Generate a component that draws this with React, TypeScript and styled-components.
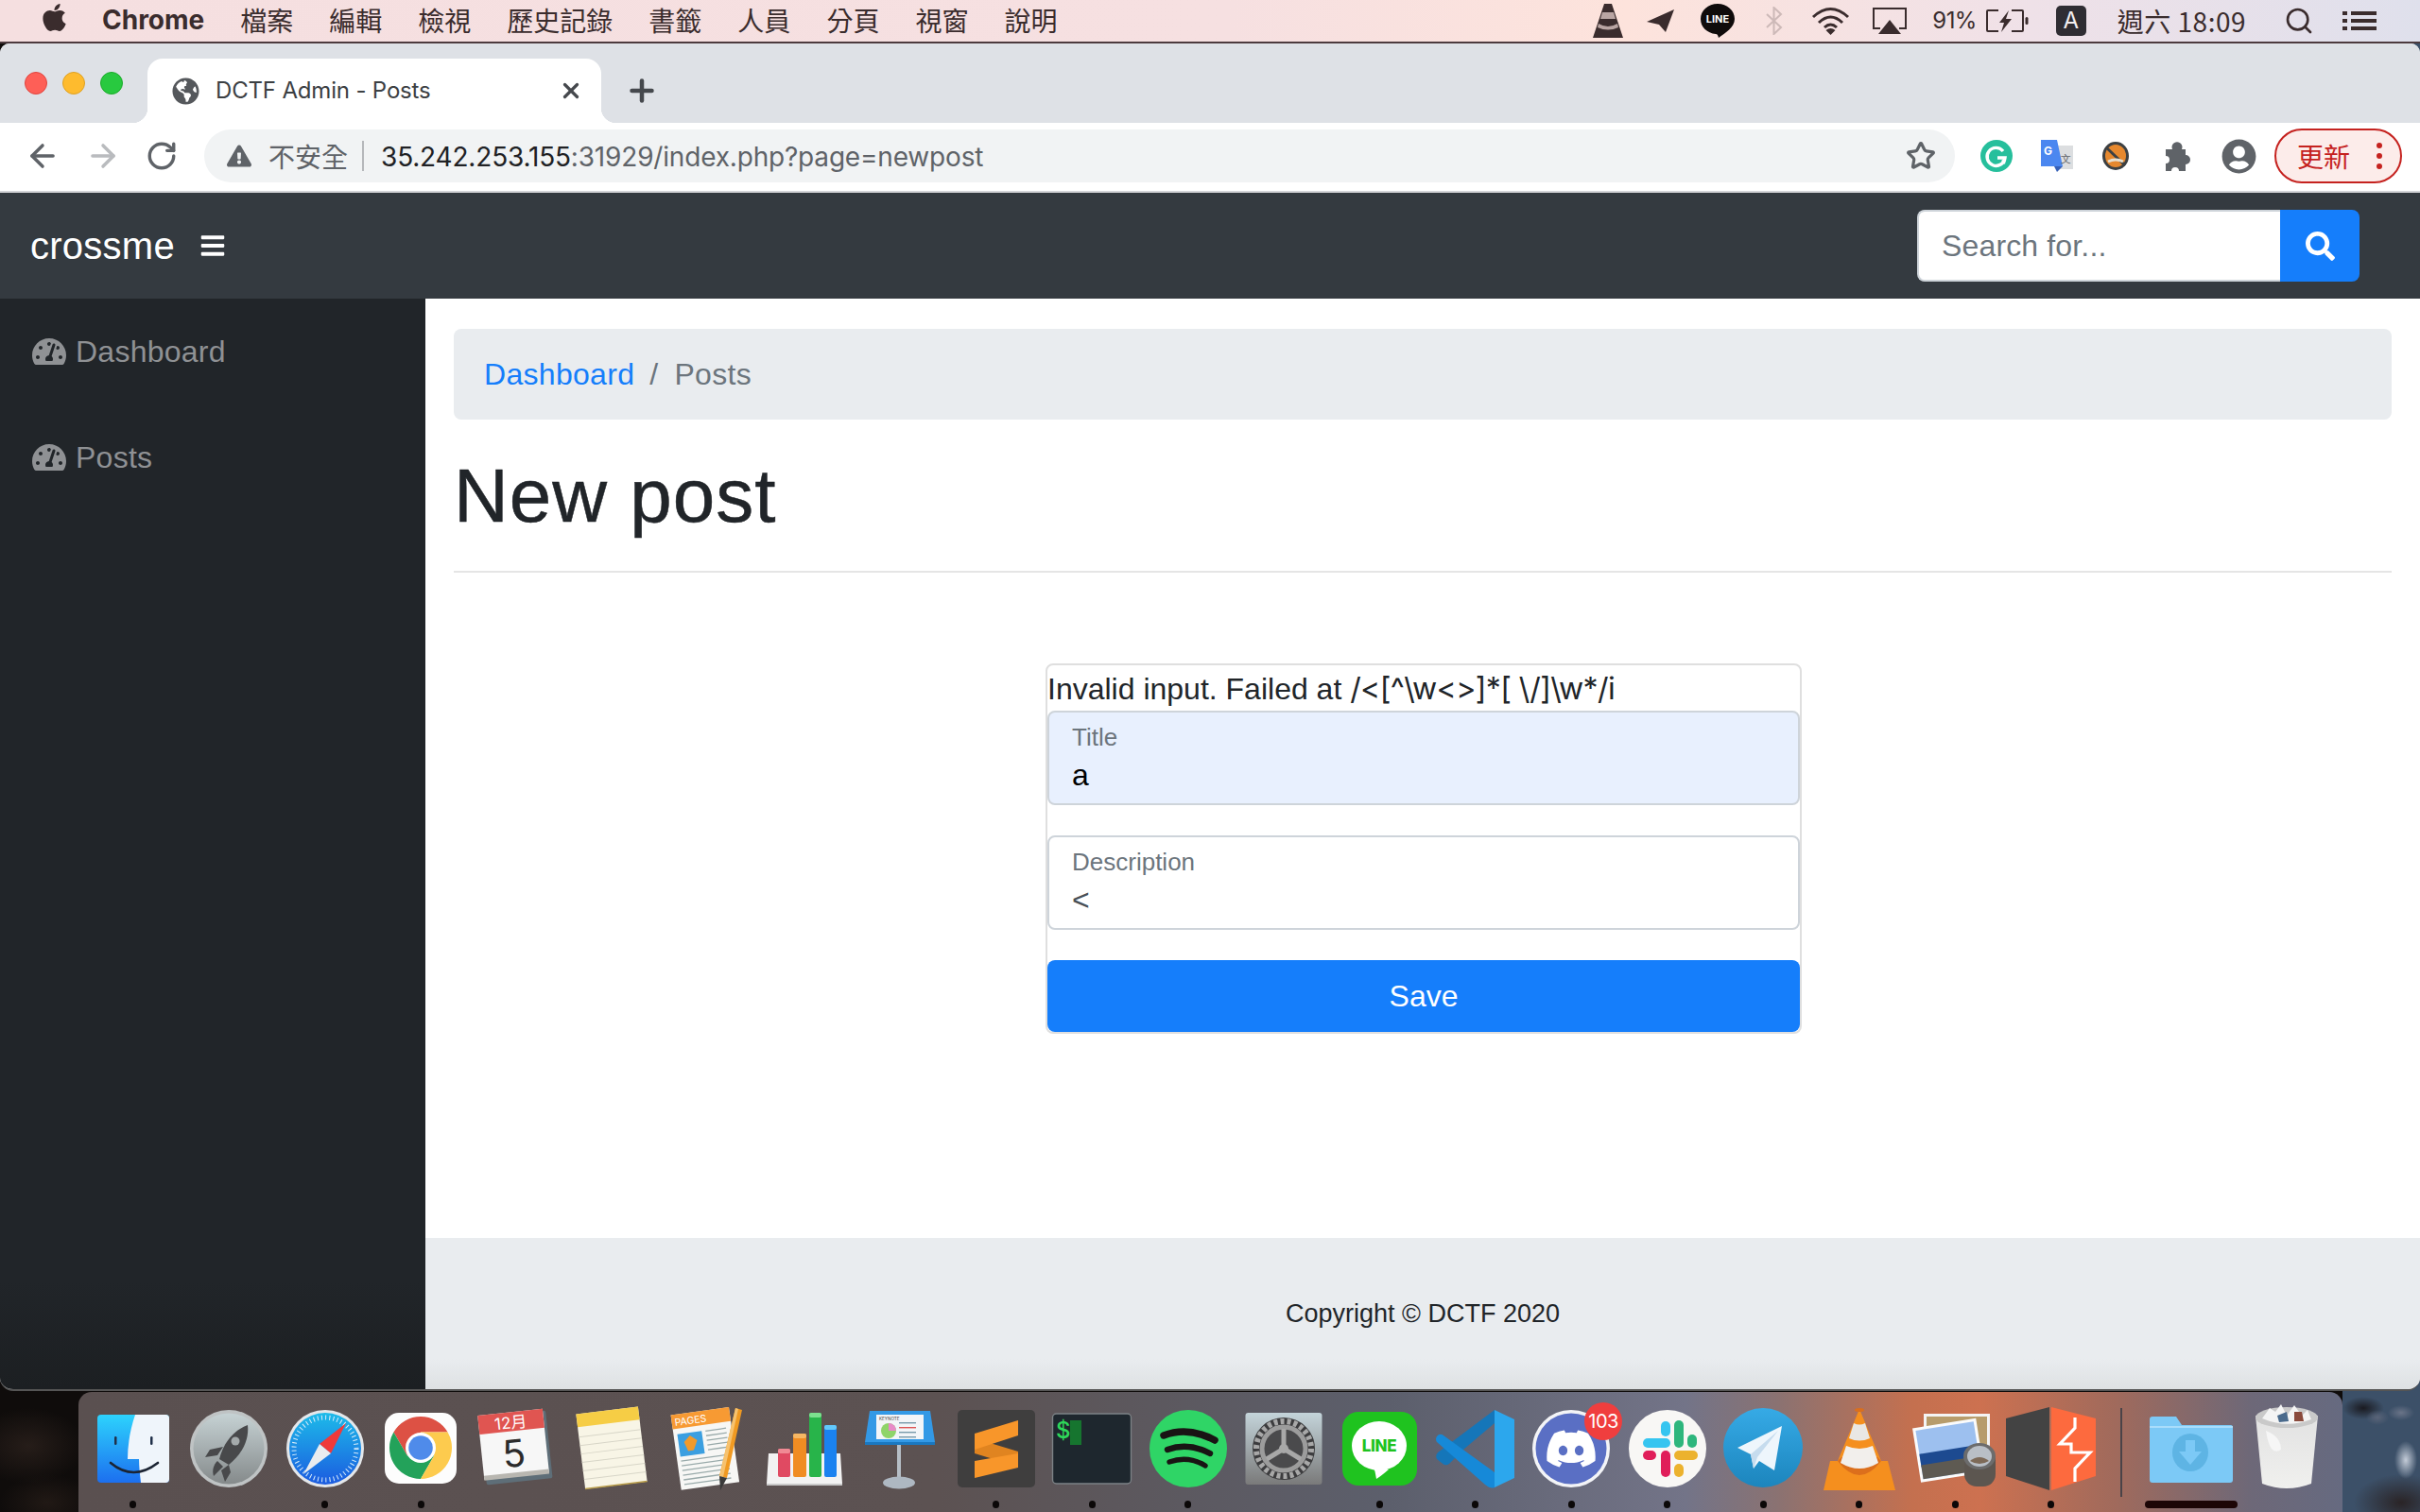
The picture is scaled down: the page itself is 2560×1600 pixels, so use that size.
import React from 'react';
import styled, { createGlobalStyle } from 'styled-components';
import { FaApple, FaBars, FaSearch, FaTachometerAlt, FaUserCircle, FaGlobeAmericas, FaDiscord, FaExclamationTriangle } from 'react-icons/fa';
import { ArrowLeft, ArrowRight, RotateCw, Star, X, Plus, Search as SearchLine } from 'lucide-react';

const SANS = `Inter, "Noto Sans CJK TC", "Noto Sans", sans-serif`;
const CJK = `"Noto Sans CJK TC", Inter, sans-serif`;
const PAGE = `"Liberation Sans", Arial, sans-serif`;

const Global = createGlobalStyle`
  html, body { margin: 0; padding: 0; background: #111; }
  * { box-sizing: border-box; }
  body { font-family: ${SANS}; }
`;

const Desktop = styled.div`
  width: 2560px; height: 1600px; overflow: hidden; display: flex; flex-direction: column;
  background:
    radial-gradient(ellipse 12px 20px at 2545px 1545px, #c4ccd8 0%, transparent 100%),
    radial-gradient(ellipse 14px 8px at 2540px 1495px, #6a7488 0%, transparent 100%),
    radial-gradient(ellipse 12px 8px at 2515px 1500px, #5a6478 0%, transparent 100%),
    radial-gradient(ellipse 22px 12px at 2500px 1490px, #1a1a20 0%, transparent 100%),
    radial-gradient(ellipse 50px 30px at 2540px 1590px, #2a2426 0%, transparent 100%),
    linear-gradient(100deg, #3c5068 0, #3c5068 2498px, #221e22 2515px, #2a2428 100%) right / 82px 100% no-repeat,
    radial-gradient(ellipse 60px 40px at 30px 1530px, #261d19 0%, transparent 100%),
    radial-gradient(ellipse 50px 30px at 50px 1590px, #211915 0%, transparent 100%),
    #0f0c0b;
`;

/* ---------- macOS menu bar ---------- */
const MenuBar = styled.header`
  height: 46px; flex: none; display: flex; align-items: center; justify-content: space-between;
  padding: 0 46px 2px 41px; color: #3a2c2d;
  background: linear-gradient(to right, #f5dfe0 0, #f6e0e1 1300px, #fde3dc 1720px, #efe1e8 2150px, #dfe0ec 100%);
  border-bottom: 2px solid #4c3a3e;
`;
const MenuLeft = styled.nav`display: flex; align-items: center;`;
const AppleMark = styled.span`display: flex; width: 67px; font-size: 33px; color: #3a2c2d; margin-top: -5px;`;
const AppName = styled.strong`font: 700 28px ${SANS}; letter-spacing: 0; margin-right: 38px;`;
const MenuItem = styled.span`font: 400 28px/1 ${CJK}; margin-right: 38px; white-space: nowrap;`;
const MenuRight = styled.div`display: flex; align-items: center; padding-top: 1px;`;
const Status = styled.span<{ $ml: number; $fade?: boolean }>`
  display: flex; align-items: center; margin-left: ${p => p.$ml}px; opacity: ${p => (p.$fade ? 0.22 : 1)};
`;
const StatusText = styled.span`font: 400 24px/1 ${SANS}; letter-spacing: -0.6px;`;
const ClockText = styled.span`font: 400 28px/1 ${CJK}; letter-spacing: 0.5px;`;
const InputBadge = styled.span`
  width: 32px; height: 32px; border-radius: 5px; background: #2f2d33; color: #f3eef0;
  font: 400 24px/32px ${SANS}; text-align: center;
`;

/* ---------- browser window ---------- */
const Window = styled.main`
  height: 1426px; flex: none; display: flex; flex-direction: column; overflow: hidden;
  border-radius: 10px 10px 14px 14px; border-bottom: 2px solid #555; background: #fff;
`;
const TabStrip = styled.div`
  height: 84px; flex: none; background: #dee1e6; display: flex; align-items: flex-end; padding-left: 26px;
`;
const Lights = styled.div`display: flex; gap: 16px; align-self: flex-start; margin-top: 30px; width: 130px;`;
const Light = styled.span<{ $c: string; $b: string }>`
  width: 24px; height: 24px; border-radius: 50%; background: ${p => p.$c}; border: 1px solid ${p => p.$b};
`;
const Tab = styled.div`
  position: relative; width: 480px; height: 68px; background: #fff; border-radius: 16px 16px 0 0;
  display: flex; align-items: center; padding: 0 19px 0 26px; color: #3c4043;
  &::before, &::after { content: ''; position: absolute; bottom: 0; width: 16px; height: 16px; }
  &::before { left: -16px; background: radial-gradient(circle at 0 0, transparent 16px, #fff 16.5px); }
  &::after { right: -16px; background: radial-gradient(circle at 100% 0, transparent 16px, #fff 16.5px); }
`;
const TabTitle = styled.span`flex: 1; font: 400 24px/1 ${SANS}; margin-left: 17px; letter-spacing: -0.17px; color: #3c4043;`;
const NewTab = styled.span`display: flex; align-self: center; margin: 0 0 0 25px; color: #45484d; padding-top: 16px;`;
const Toolbar = styled.div`
  height: 74px; flex: none; background: #fff; border-bottom: 2px solid #d3d4d8; display: flex; align-items: center;
  padding: 0 19px 2px 26px;
`;
const NavBtn = styled.span<{ $off?: boolean }>`
  display: flex; width: 64px; color: ${p => (p.$off ? '#b9bbbe' : '#5f6368')};
`;
const Omnibox = styled.div`
  flex: 1; height: 56px; margin: 0 12px 0 -2px; background: #f1f3f4; border-radius: 28px; display: flex; align-items: center;
  padding: 0 20px 0 24px;
`;
const Insecure = styled.span`font: 400 28px/1 ${CJK}; color: #5f6368; margin-left: 18px; white-space: nowrap;`;
const OmniDivider = styled.span`width: 2px; height: 32px; background: #b5b7ba; margin: 0 18px 0 15px;`;
const Url = styled.span`flex: 1; font: 400 28px/1 ${SANS}; color: #5f6368; letter-spacing: -0.18px; padding-top: 1px;`;
const UrlHost = styled.span`color: #202124;`;
const ExtSlot = styled.span<{ $w: number }>`display: flex; justify-content: center; align-items: center; width: ${p => p.$w}px; color: #5f6368;`;
const UpdatePill = styled.div`
  width: 135px; height: 58px; margin-left: 10px; border: 2px solid #c5221f; border-radius: 29px; background: #fcecea;
  display: flex; align-items: center; justify-content: space-between; padding: 0 19px 0 22px;
  color: #c5221f; font: 400 28px/1 ${CJK};
`;
const Kebab = styled.span`display: flex; flex-direction: column; gap: 5px;`;
const KebabDot = styled.span`width: 6px; height: 6px; border-radius: 50%; background: #c5221f;`;

/* ---------- page ---------- */
const Navbar = styled.div`
  height: 112px; flex: none; background: #343a40; display: flex; align-items: center; padding: 0 64px 0 32px;
`;
const Brand = styled.span`font: 400 40px/1 ${PAGE}; color: #fff; margin-right: 26px; letter-spacing: 0.25px;`;
const Burger = styled.span`display: flex; color: #fff; flex: 1;`;
const SearchGroup = styled.form`display: flex; height: 76px; margin: 0;`;
const SearchInput = styled.input`
  width: 384px; height: 76px; border: 2px solid #ced4da; border-right: 0; border-radius: 8px 0 0 8px; background: #fff;
  padding: 0 24px; font: 400 32px ${PAGE}; letter-spacing: 0.15px; outline: 0; color: #495057;
  &::placeholder { color: #6c757d; opacity: 1; }
`;
const SearchBtn = styled.button`
  width: 84px; height: 76px; border: 0; border-radius: 0 8px 8px 0; background: #157efb; color: #fff;
  display: flex; align-items: center; justify-content: center; padding: 0;
`;
const Body = styled.div`flex: 1; display: flex; min-height: 0;`;
const Sidebar = styled.aside`
  width: 450px; flex: none; padding-top: 28px; background: linear-gradient(to bottom, #212529 0, #212529 1040px, #1c1f22 100%);
`;
const SideLink = styled.a`
  display: flex; align-items: center; gap: 10px; height: 56px; margin-bottom: 56px; padding-left: 34px;
  color: #8f9194; font: 400 32px/1 ${PAGE}; letter-spacing: 0.25px;
`;
const Main = styled.div`flex: 1; display: flex; flex-direction: column; min-width: 0;`;
const Content = styled.div`flex: 1; padding: 32px 30px 0;`;
const Breadcrumb = styled.ol`
  margin: 0; height: 96px; padding: 0 32px; background: #e9ecef; border-radius: 8px; display: flex; align-items: center;
  list-style: none; font: 400 32px/1 ${PAGE}; letter-spacing: 0.3px; color: #6c757d;
`;
const CrumbLink = styled.a`color: #157efb;`;
const CrumbSep = styled.span`margin: 0 17px 0 16px;`;
const Heading = styled.h1`
  margin: 33px 0 0; font: 400 80px/96px ${PAGE}; color: #212529; letter-spacing: 1px; -webkit-text-stroke: 0.5px #212529;
`;
const Rule = styled.hr`margin: 31px 0 0; border: 0; border-top: 2px solid #e5e5e5;`;
const Card = styled.form`
  width: 800px; height: 392px; margin: 96px auto 0 626px;
  border: 2px solid #dfdfdf; border-radius: 8px; display: flex; flex-direction: column;
`;
const ErrorLine = styled.p`margin: 0; height: 48px; font: 400 32px/32px ${PAGE}; color: #212529; padding-top: 9px; white-space: nowrap;`;
const Regex = styled.span`font-family: ${SANS}; letter-spacing: -0.6px;`;
const Field = styled.label<{ $filled?: boolean }>`
  display: block; height: 100px; margin-bottom: 32px; padding: 11px 24px 0 24px; border: 2px solid #ced4da; border-radius: 8px;
  background: ${p => (p.$filled ? '#e8f0fe' : '#fff')};
`;
const FieldLabel = styled.span`display: block; font: 400 26px/30px ${PAGE}; color: #6c757d;`;
const FieldInput = styled.input<{ $filled?: boolean }>`
  display: block; width: 100%; border: 0; padding: 0; margin-top: 7px; background: transparent; outline: 0;
  font: 400 32px/36px ${PAGE}; color: ${p => (p.$filled ? '#000' : '#495057')};
`;
const SaveBtn = styled.button`
  height: 76px; border: 0; border-radius: 8px; background: #157efb; color: #fff; font: 400 32px ${PAGE}; padding: 0;
`;
const Footer = styled.footer`
  height: 160px; flex: none; display: flex; align-items: center; justify-content: center;
  background: linear-gradient(to bottom, #e9ecef 0, #e9ecef 80%, #dee1e3 100%);
  font: 400 27px/1 ${PAGE}; color: #212529;
`;

/* ---------- dock ---------- */
const Dock = styled.footer`
  flex: none; height: 127px; margin: 1px 82px 0 83px; border-radius: 14px 14px 0 0; padding: 11px 0 0 7px; display: flex;
  background: linear-gradient(to right, #5a5050 0, #5c5252 38%, #5c5f6c 58%, #737488 71%, #8a7272 75%, #c4704f 81%, #cd7150 84%, #a06a5c 90%, #6d6878 96%, #666a80 100%);
`;
const Slot = styled.div`width: 101.45px; flex: none; display: flex; flex-direction: column; align-items: center;`;
const IconArt = styled.svg`width: 100px; height: 96px; flex: none; display: block; overflow: visible;`;
const Dot = styled.span<{ $on?: boolean; $wide?: boolean }>`
  margin-top: 8px; height: 8px; width: ${p => (p.$wide ? 98 : 7)}px; border-radius: 4px;
  background: ${p => (p.$wide ? '#1c0606' : p.$on ? '#0b0808' : 'transparent')};
`;
const DockSep = styled.span`width: 2px; height: 94px; background: #4a4348; margin: 6px 22px 0 23px; flex: none;`;

const T: React.FC<React.SVGProps<SVGTextElement>> = ({ children, ...p }) => (
  <text fontFamily="Inter, 'Noto Sans CJK TC', sans-serif" {...p}>{children}</text>
);

const Finder = () => (
  <>
    <defs>
      <linearGradient id="fb" x1="0" y1="0" x2="0" y2="1"><stop offset="0" stopColor="#2dd3fd" /><stop offset="1" stopColor="#1c6fef" /></linearGradient>
      <clipPath id="fc"><rect x="12" y="13" width="76" height="72" rx="4" /></clipPath>
    </defs>
    <g clipPath="url(#fc)">
      <rect x="12" y="13" width="76" height="72" fill="url(#fb)" />
      <path d="M52 13 H88 V85 H58 C57 76 56 68 56 60 H44 C44 44 47 28 52 13Z" fill="#eff5fb" />
    </g>
    <rect x="30" y="36" width="2.5" height="9" rx="1.2" fill="#20304a" />
    <rect x="68" y="36" width="2.5" height="9" rx="1.2" fill="#20304a" />
    <path d="M26 64 Q50 84 76 64" fill="none" stroke="#1b2433" strokeWidth="2.6" strokeLinecap="round" />
  </>
);
const Launchpad = () => (
  <>
    <defs><linearGradient id="lp" x1="0" y1="0" x2="0" y2="1"><stop offset="0" stopColor="#c6d2d4" /><stop offset="1" stopColor="#858a8b" /></linearGradient></defs>
    <circle cx="50" cy="49" r="41" fill="#bfc3c4" />
    <circle cx="50" cy="49" r="37.5" fill="url(#lp)" />
    <path d="M70 24 C72 42 62 56 50 66 L40 60 C44 44 54 30 70 24Z" fill="#48494b" />
    <path d="M44 47 L30 50 L25 58 L38 56Z M50 66 L52 74 L46 84 L42 72Z" fill="#48494b" />
    <path d="M38 62 L44 68 L34 78 C32 72 34 66 38 62Z" fill="#48494b" />
    <circle cx="57" cy="41" r="4.5" fill="#a4aaab" />
  </>
);
const Safari = () => (
  <>
    <defs><linearGradient id="sf" x1="0" y1="0" x2="0" y2="1"><stop offset="0" stopColor="#1dbbe9" /><stop offset="1" stopColor="#1b5be0" /></linearGradient></defs>
    <circle cx="50" cy="49" r="41" fill="#e4e7ea" />
    <circle cx="50" cy="49" r="38" fill="url(#sf)" />
    <circle cx="50" cy="49" r="33" fill="none" stroke="#d8ecfa" strokeWidth="5" strokeDasharray="1 3.2" />
    <path d="M72 22 L44 44 L56 54Z" fill="#f03a3a" />
    <path d="M27 76 L44 44 L56 54Z" fill="#e9ecef" />
  </>
);
const Chrome = () => (
  <>
    <rect x="12" y="11" width="76" height="75" rx="15" fill="#fdfdfd" />
    <path d="M21.4 31.5 A33 33 0 0 1 78.6 31.5 H50 L35.7 56.25Z" fill="#dd5144" />
    <path d="M21.4 31.5 A33 33 0 0 0 50 81 L64.3 56.25 H35.7Z" fill="#23a25a" />
    <path d="M78.6 31.5 A33 33 0 0 1 50 81 L64.3 56.25 L50 31.5Z" fill="#fdcb4e" />
    <circle cx="50" cy="48" r="16" fill="#fff" />
    <circle cx="50" cy="48" r="12.8" fill="#4f8bea" />
  </>
);
const Calendar = () => (
  <g transform="rotate(-6 50 48)">
    <rect x="15" y="12" width="70" height="72" rx="2" fill="#5e6e78" />
    <rect x="13" y="10" width="69" height="68" fill="#f7f7f7" />
    <rect x="13" y="10" width="69" height="20" fill="#e05551" />
    <T x="47" y="27" fontSize="17" fill="#fff" textAnchor="middle">12月</T>
    <T x="47" y="68" fontSize="40" fill="#2b2b2b" textAnchor="middle">5</T>
    <rect x="13" y="74" width="69" height="5" fill="#b8b6b0" />
  </g>
);
const Notes = () => (
  <g transform="rotate(-7 50 48)">
    <rect x="16" y="8" width="66" height="80" fill="#f8f5e6" />
    <rect x="16" y="8" width="66" height="14" fill="#f6cd45" />
    {[32, 41, 50, 59, 68, 77].map(y => <rect key={y} x="16" y={y} width="66" height="1" fill="#d8d6c8" />)}
    <rect x="16" y="87" width="66" height="1.5" fill="#b99d49" />
  </g>
);
const Pages = () => (
  <>
    <g transform="rotate(-8 46 50)">
      <rect x="16" y="9" width="62" height="80" fill="#f7f7f5" />
      <rect x="16" y="9" width="62" height="15" fill="#f79a33" />
      <T x="19" y="21" fontSize="10.5" fill="#fff">PAGES</T>
      <rect x="20" y="30" width="26" height="24" fill="#3b9fe0" />
      <path d="M33 33 L40 39 L35 49 L29 49 L26 39Z" fill="#f19a2b" />
      {[30, 35, 40, 45, 50].map(y => <rect key={y} x="50" y={y} width="22" height="1.3" fill="#9aa" />)}
      {[58, 63, 68, 73, 78, 83].map(y => <rect key={y} x="20" y={y} width="50" height="1.3" fill="#9aa" />)}
    </g>
    <path d="M79 6 L86 8 L70 80 L62 78Z" fill="#f09a22" />
    <path d="M79 6 L82 7 L66 79 L62 78Z" fill="#f6c26f" />
    <path d="M62 78 L70 80 L63 93Z" fill="#3a3a3a" />
  </>
);
const Numbers = () => (
  <>
    <path d="M12 54 H88 L90 86 H10Z" fill="#f2f2f2" />
    <rect x="10" y="86" width="80" height="2" fill="#c9c9c9" />
    <rect x="22" y="49" width="13" height="30" rx="2" fill="#e04a62" />
    <rect x="22" y="49" width="13" height="5" rx="2" fill="#f08a94" />
    <rect x="38" y="33" width="14" height="46" rx="2" fill="#f08c22" />
    <rect x="38" y="33" width="14" height="5" rx="2" fill="#f6b764" />
    <rect x="55" y="11" width="13" height="68" rx="2" fill="#28b44a" />
    <rect x="55" y="11" width="13" height="5" rx="2" fill="#7ce08e" />
    <rect x="71" y="24" width="13" height="55" rx="2" fill="#1a82f0" />
    <rect x="71" y="24" width="13" height="5" rx="2" fill="#62c8fb" />
  </>
);
const Keynote = () => (
  <>
    <path d="M18 9 H82 L87 42 H13Z" fill="#3399e6" />
    <rect x="13" y="42" width="74" height="3" fill="#1a78c0" />
    <rect x="25" y="13" width="50" height="26" fill="#f3f5f8" />
    <T x="28" y="19" fontSize="4.6" fill="#444">KEYNOTE</T>
    <circle cx="38" cy="30" r="8" fill="#8fd46a" />
    <path d="M38 30 V22 A8 8 0 0 1 46 30Z" fill="#e88ac8" />
    <rect x="49" y="21" width="18" height="1.4" fill="#79a" />
    <rect x="49" y="26" width="18" height="1.4" fill="#d55" />
    <rect x="49" y="31" width="18" height="1.4" fill="#79a" />
    <rect x="49" y="36" width="18" height="1.4" fill="#79a" />
    <rect x="47" y="45" width="4" height="36" fill="#b6bec6" />
    <ellipse cx="49" cy="85" rx="17" ry="6.5" fill="#aeb8c2" />
  </>
);
const Sublime = () => (
  <>
    <rect x="9" y="8" width="82" height="82" rx="5" fill="#3f3e3e" />
    <path d="M27 38 L73 52 V68 L27 54Z" fill="#e08420" />
    <path d="M73 19 V35 L27 50 V33Z" fill="#f8962a" />
    <path d="M73 54 V69 L27 80 V62Z" fill="#f8962a" />
  </>
);
const Terminal = () => (
  <>
    <rect x="8.5" y="12" width="83" height="74" rx="4" fill="#1e272e" stroke="#7c8286" strokeWidth="1.4" />
    <T x="12" y="38" fontSize="24" fill="#2ed85a" fontWeight="500">$</T>
    <rect x="27" y="19" width="12" height="26" fill="#16752f" />
  </>
);
const Spotify = () => (
  <>
    <circle cx="50" cy="49" r="41" fill="#2fd566" />
    <path d="M24 35 Q50 25 78 40" fill="none" stroke="#191414" strokeWidth="7.5" strokeLinecap="round" />
    <path d="M28 50 Q50 42 73 54" fill="none" stroke="#191414" strokeWidth="6.4" strokeLinecap="round" />
    <path d="M30 63 Q50 56 68 67" fill="none" stroke="#191414" strokeWidth="5.4" strokeLinecap="round" />
  </>
);
const SysPrefs = () => (
  <>
    <defs><linearGradient id="sp" x1="0" y1="0" x2="0" y2="1"><stop offset="0" stopColor="#c4d4da" /><stop offset="1" stopColor="#7a7a7a" /></linearGradient></defs>
    <rect x="9.5" y="11" width="81" height="76" rx="3" fill="url(#sp)" />
    <circle cx="50" cy="49" r="33" fill="#3c3c3e" />
    <circle cx="50" cy="49" r="29" fill="none" stroke="#a8a8a8" strokeWidth="6" strokeDasharray="4 3" />
    <circle cx="50" cy="49" r="23" fill="#4a4a4c" stroke="#9c9c9c" strokeWidth="5" />
    <path d="M50 49 L50 28 M50 49 L32 60 M50 49 L68 60" stroke="#a8a8a8" strokeWidth="5" />
    <circle cx="50" cy="49" r="5" fill="#a8a8a8" />
  </>
);
const LineApp = () => (
  <>
    <rect x="11" y="10" width="79" height="78" rx="17" fill="#1fc31f" />
    <ellipse cx="50" cy="46" rx="29" ry="26" fill="#fff" />
    <path d="M44 68 L50 68 L60 71 Q52 78 47 81 Q46 74 44 68Z" fill="#fff" />
    <T x="50" y="52" fontSize="17" fontWeight="800" fill="#1fc31f" textAnchor="middle" letterSpacing="-0.3">LINE</T>
  </>
);
const VSCode = () => (
  <>
    <path d="M70 22 L37 50 L22 65 Q18 68 14 64 L9 60 Q7 56 10 53 L70 8Z" fill="#1576b9" />
    <path d="M9 36 Q12 32 16 35 L70 74 V90 Q66 92 60 87 L9 42 Q7 39 9 36Z" fill="#1689d8" />
    <path d="M70 8 L91 18 V80 L70 90Z" fill="#2ca7ed" />
  </>
);
const Discord = () => (
  <>
    <circle cx="50" cy="49" r="41" fill="#f3f4f7" />
    <circle cx="50" cy="49" r="37.5" fill="#5a6fc4" />
    <FaDiscord x="22" y="21" size={56} color="#fff" />
    <circle cx="84" cy="20" r="20" fill="#f03e3e" />
    <T x="84" y="27" fontSize="20" fill="#fff" textAnchor="middle" letterSpacing="-0.6">103</T>
  </>
);
const Slack = () => (
  <>
    <circle cx="50" cy="49" r="41" fill="#f8f7f5" />
    <rect x="43" y="20" width="10" height="16" rx="5" fill="#36c5f0" />
    <rect x="24" y="38" width="29" height="10" rx="5" fill="#36c5f0" />
    <rect x="57" y="19" width="10" height="29" rx="5" fill="#2eb67d" />
    <rect x="71" y="34" width="10" height="14" rx="5" fill="#2eb67d" />
    <rect x="57" y="51" width="25" height="10" rx="5" fill="#ecb22e" />
    <rect x="57" y="65" width="10" height="14" rx="5" fill="#ecb22e" />
    <rect x="43" y="51" width="10" height="28" rx="5" fill="#e01e5a" />
    <rect x="24" y="51" width="14" height="10" rx="5" fill="#e01e5a" />
  </>
);
const TelegramApp = () => (
  <>
    <defs><linearGradient id="tg" x1="0" y1="0" x2="0" y2="1"><stop offset="0" stopColor="#36aae6" /><stop offset="1" stopColor="#1c85bd" /></linearGradient></defs>
    <circle cx="50" cy="48" r="42" fill="url(#tg)" />
    <path d="M23 48 L70 25 L62 72 L46 62 L40 70 L37 55Z" fill="#eef6fc" />
    <path d="M37 55 L66 30 L44 58 L40 70Z" fill="#c6dcee" />
  </>
);
const Vlc = () => (
  <>
    <path d="M19 62 H27 L50 7 L73 62 H80 L88 93 H12Z" fill="#f58f1e" />
    <path d="M27 62 Q50 92 73 62 L69 58 H31Z" fill="#dc6f1c" />
    <path d="M44 22 Q50 25 56 22 L61 38 Q50 43 39 38Z" fill="#e9e7e4" />
    <path d="M36 46 Q50 52 64 46 L70 64 Q50 76 30 64Z" fill="#f2efec" />
    <ellipse cx="50" cy="8" rx="5" ry="2" fill="#d96f1f" />
  </>
);
const Preview = () => (
  <>
    <rect x="17" y="12" width="70" height="54" fill="#f4f4f4" />
    <rect x="20" y="15" width="64" height="50" fill="#b79c6b" />
    <g transform="rotate(-9 42 50)">
      <rect x="9" y="22" width="68" height="58" fill="#fbfbfb" />
      <rect x="12" y="25" width="62" height="52" fill="#9dc0ef" />
      <rect x="12" y="50" width="62" height="14" fill="#1d4a90" />
      <rect x="12" y="62" width="62" height="15" fill="#5e5a52" />
    </g>
    <rect x="60" y="48" width="33" height="41" rx="13" fill="#5c5650" />
    <ellipse cx="76" cy="57" rx="17" ry="14" fill="#6c6c6c" />
    <ellipse cx="76" cy="57" rx="13" ry="11" fill="#b9bfc6" />
    <path d="M66 62 Q76 54 86 62 Q76 68 66 62Z" fill="#7d6a58" />
  </>
);
const Burp = () => (
  <>
    <path d="M3 17 L49 5 V93 L3 78Z" fill="#434343" />
    <path d="M51 5 L98 17 V78 L51 93Z" fill="#fd6a3e" />
    <path d="M76 16 V27 L60 44 H72 V53 H92 L76 70 V84" fill="none" stroke="#fff" strokeWidth="3.2" />
  </>
);
const Downloads = () => (
  <>
    <path d="M6 18 Q6 15 9 15 H34 L40 24 H92 Q94 24 94 27 V82 Q94 85 91 85 H9 Q6 85 6 82Z" fill="#7cc9f6" />
    <rect x="6" y="25" width="88" height="2" fill="#a9ddfb" />
    <ellipse cx="49" cy="53" rx="19" ry="20" fill="#5eb4e4" />
    <path d="M44 40 H54 V52 H61 L49 66 L37 52 H44Z" fill="#7cc9f6" />
  </>
);
const Trash = () => (
  <>
    <defs><linearGradient id="tr" x1="0" y1="0" x2="0" y2="1"><stop offset="0" stopColor="#e2e2e2" /><stop offset="1" stopColor="#f0f0ee" /></linearGradient></defs>
    <path d="M17 14 L24 86 Q50 96 76 86 L83 14Z" fill="url(#tr)" />
    <ellipse cx="50" cy="16" rx="33" ry="11" fill="#c9c9c9" />
    <path d="M24 17 L32 6 L38 10 L44 2 L50 14 L58 3 L66 14 L72 8 L76 18 Q50 28 24 17Z" fill="#f4f4f4" />
    <path d="M40 14 L50 10 L52 20 L42 21Z" fill="#4a6a8c" />
    <path d="M58 10 L66 10 L68 20 L58 20Z" fill="#8a4a3c" />
    <path d="M28 30 Q44 36 44 50 Q32 58 28 30Z" fill="#f6f6f6" />
  </>
);

const apps: { Art: React.FC; on?: boolean }[] = [
  { Art: Finder, on: true }, { Art: Launchpad }, { Art: Safari, on: true }, { Art: Chrome, on: true }, { Art: Calendar },
  { Art: Notes }, { Art: Pages }, { Art: Numbers }, { Art: Keynote }, { Art: Sublime, on: true }, { Art: Terminal, on: true },
  { Art: Spotify, on: true }, { Art: SysPrefs }, { Art: LineApp, on: true }, { Art: VSCode, on: true }, { Art: Discord, on: true },
  { Art: Slack, on: true }, { Art: TelegramApp, on: true }, { Art: Vlc, on: true }, { Art: Preview, on: true }, { Art: Burp, on: true },
];

const DockItem: React.FC<{ Art: React.FC; on?: boolean; wide?: boolean }> = ({ Art, on, wide }) => (
  <Slot>
    <IconArt viewBox="0 0 100 96"><Art /></IconArt>
    <Dot $on={on} $wide={wide} />
  </Slot>
);

const menus = ['檔案', '編輯', '檢視', '歷史記錄', '書籤', '人員', '分頁', '視窗', '說明'];

const BarIcon = ({ w, h, vb, children }: { w: number; h: number; vb: string; children: React.ReactNode }) => (
  <svg width={w} height={h} viewBox={vb}>{children}</svg>
);

export default function App() {
  return (
    <Desktop>
      <Global />
      <MenuBar>
        <MenuLeft>
          <AppleMark><FaApple /></AppleMark>
          <AppName>Chrome</AppName>
          {menus.map(m => <MenuItem key={m}>{m}</MenuItem>)}
        </MenuLeft>
        <MenuRight>
          <Status $ml={0}>
            <BarIcon w={32} h={36} vb="0 0 32 36">
              <path d="M12 0 H20 L32 36 H0Z" fill="#3a2c2d" />
              <path d="M10 9 H22 L24 16 H8Z M6 21 Q16 27 26 21 L27 25 Q16 30 5 25Z" fill="#b9a5a3" />
            </BarIcon>
          </Status>
          <Status $ml={25}>
            <BarIcon w={30} h={26} vb="0 0 30 26">
              <path d="M0 14 L29 1 L20 25 L13 17Z" fill="#3a2c2d" />
            </BarIcon>
          </Status>
          <Status $ml={27}>
            <BarIcon w={36} h={36} vb="0 0 36 36">
              <path d="M18 0 C28 0 36 7 36 16 C36 25 26 31 19 36 C18 33 18 32 16 32 C7 31 0 25 0 16 C0 7 8 0 18 0Z" fill="#0f0b0b" />
              <text x="18" y="20" fontFamily="Inter" fontSize="11" fontWeight="700" fill="#fff" textAnchor="middle">LINE</text>
            </BarIcon>
          </Status>
          <Status $ml={32} $fade>
            <BarIcon w={19} h={30} vb="0 0 19 30">
              <path d="M2 8 L17 22 L9.5 29 V1 L17 8 L2 22" fill="none" stroke="#3a2c2d" strokeWidth="2" />
            </BarIcon>
          </Status>
          <Status $ml={30}>
            <BarIcon w={41} h={30} vb="0 0 41 30">
              <path d="M2 11 Q20.5 -6 39 11 M8 17 Q20.5 5 33 17 M14 22 Q20.5 16 27 22" fill="none" stroke="#3a2c2d" strokeWidth="3" />
              <path d="M20.5 30 L15.5 25 Q20.5 21 25.5 25Z" fill="#3a2c2d" />
            </BarIcon>
          </Status>
          <Status $ml={24}>
            <BarIcon w={36} h={28} vb="0 0 36 28">
              <path d="M8 22 H1 V1 H35 V22 H28" fill="none" stroke="#3a2c2d" strokeWidth="2" />
              <path d="M18 13 L30 28 H6Z" fill="#3a2c2d" />
            </BarIcon>
          </Status>
          <Status $ml={27}><StatusText>91%</StatusText></Status>
          <Status $ml={10}>
            <BarIcon w={45} h={24} vb="0 0 45 24">
              <path d="M13 1 H2 Q1 1 1 2 V22 Q1 23 2 23 H13 M27 1 H38 Q39 1 39 2 V22 Q39 23 38 23 H27" fill="none" stroke="#3a2c2d" strokeWidth="2" />
              <rect x="41.5" y="8" width="3" height="8" rx="1.5" fill="#3a2c2d" />
              <path d="M24 1 L14 14 H19 L16 24 L27 10 H21Z" fill="#3a2c2d" />
            </BarIcon>
          </Status>
          <Status $ml={29}><InputBadge>A</InputBadge></Status>
          <Status $ml={33}><ClockText>週六 18:09</ClockText></Status>
          <Status $ml={40}><SearchLine size={32} strokeWidth={2} color="#3a2c2d" /></Status>
          <Status $ml={30}>
            <BarIcon w={36} h={22} vb="0 0 36 22">
              <path d="M0 1 H5 V5 H0Z M9 1 H36 V5 H9Z M0 9 H5 V13 H0Z M9 9 H36 V13 H9Z M0 17 H5 V21 H0Z M9 17 H36 V21 H9Z" fill="#3a2c2d" />
            </BarIcon>
          </Status>
        </MenuRight>
      </MenuBar>

      <Window>
        <TabStrip>
          <Lights>
            <Light $c="#fe5f57" $b="#e0443e" />
            <Light $c="#febb2e" $b="#dea123" />
            <Light $c="#28c93f" $b="#1aab29" />
          </Lights>
          <Tab>
            <FaGlobeAmericas size={29} color="#55585c" />
            <TabTitle>DCTF Admin - Posts</TabTitle>
            <X size={26} strokeWidth={3} color="#45484d" />
          </Tab>
          <NewTab><Plus size={36} strokeWidth={3} /></NewTab>
        </TabStrip>
        <Toolbar>
          <NavBtn><ArrowLeft size={38} strokeWidth={2.2} /></NavBtn>
          <NavBtn $off><ArrowRight size={38} strokeWidth={2.2} /></NavBtn>
          <NavBtn><RotateCw size={34} strokeWidth={2.4} /></NavBtn>
          <Omnibox>
            <FaExclamationTriangle size={26} color="#5f6368" />
            <Insecure>不安全</Insecure>
            <OmniDivider />
            <Url><UrlHost>35.242.253.155</UrlHost>:31929/index.php?page=newpost</Url>
            <Star size={32} strokeWidth={2.4} color="#5f6368" />
          </Omnibox>
          <ExtSlot $w={64}>
            <BarIcon w={34} h={34} vb="0 0 34 34">
              <circle cx="17" cy="17" r="17" fill="#26bf9c" />
              <path d="M24 12 A9.5 9.5 0 1 0 26 19 H18" fill="none" stroke="#fff" strokeWidth="3.4" />
              <path d="M22 22 L26 26 L27 19Z" fill="#fff" />
            </BarIcon>
          </ExtSlot>
          <ExtSlot $w={64}>
            <BarIcon w={34} h={34} vb="0 0 34 34">
              <path d="M14 6 H34 V31 H19Z" fill="#dcdee0" />
              <path d="M0 0 H17 L23 28 H0Z" fill="#4b87f0" />
              <path d="M14 28 H23 L17 34Z" fill="#3560b8" />
              <text x="3" y="16" fontFamily="Inter" fontSize="12" fontWeight="700" fill="#fff">G</text>
              <text x="21" y="24" fontFamily="Inter" fontSize="11" fill="#5f6368">文</text>
            </BarIcon>
          </ExtSlot>
          <ExtSlot $w={60}>
            <BarIcon w={28} h={30} vb="0 0 28 30">
              <ellipse cx="14" cy="15" rx="14" ry="15" fill="#3c4043" />
              <ellipse cx="14" cy="15" rx="11" ry="12" fill="#e6882e" />
              <path d="M4 6 L24 25" stroke="#3c4043" strokeWidth="3" />
              <path d="M6 21 Q14 17 22 21" stroke="#e8e0d0" strokeWidth="3" fill="none" />
            </BarIcon>
          </ExtSlot>
          <ExtSlot $w={72}>
            <BarIcon w={30} h={32} vb="0 0 30 32">
              <path d="M2 9 H9 A5.5 5.5 0 1 1 19 9 H23 V15 A5 5 0 1 1 23 25 V32 H16 A4 4 0 0 0 8 32 H2 V24 A4 4 0 0 0 2 16Z" fill="#5f6368" />
            </BarIcon>
          </ExtSlot>
          <ExtSlot $w={56}><FaUserCircle size={37} /></ExtSlot>
          <UpdatePill>
            更新
            <Kebab><KebabDot /><KebabDot /><KebabDot /></Kebab>
          </UpdatePill>
        </Toolbar>
        <Navbar>
          <Brand>crossme</Brand>
          <Burger><FaBars size={28} /></Burger>
          <SearchGroup>
            <SearchInput placeholder="Search for..." readOnly />
            <SearchBtn type="button"><FaSearch size={31} /></SearchBtn>
          </SearchGroup>
        </Navbar>
        <Body>
          <Sidebar>
            <SideLink><FaTachometerAlt size={36} />Dashboard</SideLink>
            <SideLink><FaTachometerAlt size={36} />Posts</SideLink>
          </Sidebar>
          <Main>
            <Content>
              <Breadcrumb>
                <li><CrumbLink>Dashboard</CrumbLink></li>
                <CrumbSep>/</CrumbSep>
                <li>Posts</li>
              </Breadcrumb>
              <Heading>New post</Heading>
              <Rule />
              <Card>
                <ErrorLine>Invalid input. Failed at <Regex>{'/<[^\\w<>]*[ \\/]\\w*/i'}</Regex></ErrorLine>
                <Field $filled>
                  <FieldLabel>Title</FieldLabel>
                  <FieldInput $filled readOnly value="a" />
                </Field>
                <Field>
                  <FieldLabel>Description</FieldLabel>
                  <FieldInput readOnly value="<" />
                </Field>
                <SaveBtn type="button">Save</SaveBtn>
              </Card>
            </Content>
            <Footer>Copyright © DCTF 2020</Footer>
          </Main>
        </Body>
      </Window>

      <Dock>
        {apps.map((a, i) => <DockItem key={i} Art={a.Art} on={a.on} />)}
        <DockSep />
        <DockItem Art={Downloads} wide />
        <DockItem Art={Trash} />
      </Dock>
    </Desktop>
  );
}
